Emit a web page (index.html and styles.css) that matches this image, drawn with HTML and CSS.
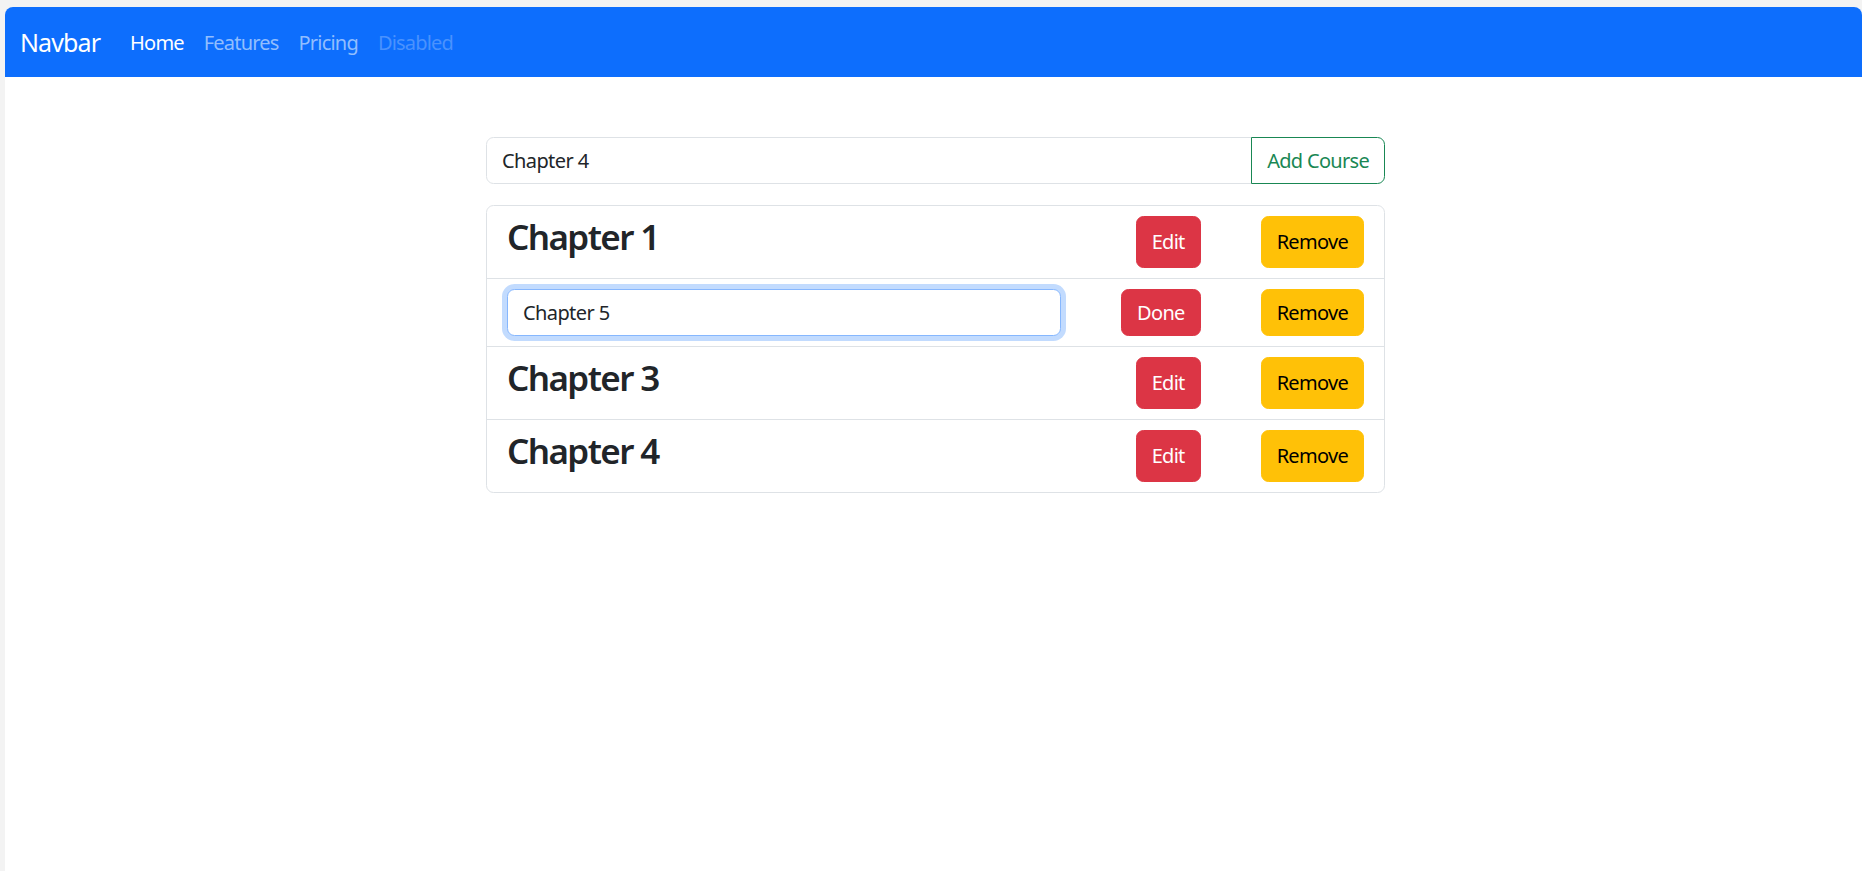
FILE: index.html
```html
<!DOCTYPE html>
<html lang="en">
<head>
<meta charset="utf-8">
<title>Courses</title>
<link rel="stylesheet" href="styles.css">
</head>
<body>
<div class="window">
  <nav class="navbar">
    <a class="brand" href="#">Navbar</a>
    <ul class="nav">
      <li><a class="nav-link active" href="#">Home</a></li>
      <li><a class="nav-link" href="#">Features</a></li>
      <li><a class="nav-link" href="#">Pricing</a></li>
      <li><a class="nav-link disabled">Disabled</a></li>
    </ul>
  </nav>
  <main class="main">
    <div class="content">
      <div class="input-group">
        <input class="field" type="text" value="Chapter 4">
        <button class="btn btn-outline-success">Add Course</button>
      </div>
      <ul class="course-list">
        <li class="course">
          <h3 class="course-title">Chapter 1</h3>
          <button class="btn btn-danger">Edit</button>
          <button class="btn btn-warning">Remove</button>
        </li>
        <li class="course editing">
          <input class="field focused" type="text" value="Chapter 5">
          <button class="btn btn-danger">Done</button>
          <button class="btn btn-warning">Remove</button>
        </li>
        <li class="course">
          <h3 class="course-title">Chapter 3</h3>
          <button class="btn btn-danger">Edit</button>
          <button class="btn btn-warning">Remove</button>
        </li>
        <li class="course">
          <h3 class="course-title">Chapter 4</h3>
          <button class="btn btn-danger">Edit</button>
          <button class="btn btn-warning">Remove</button>
        </li>
      </ul>
    </div>
  </main>
</div>
</body>
</html>
```

FILE: styles.css
```css
* {
  box-sizing: border-box;
}

html, body {
  margin: 0;
  height: 100%;
}

body {
  background: #f3f3f3;
  padding: 7px 0 0 5px;
  font-family: "Noto Sans", "Open Sans", sans-serif;
  font-size: 20px;
  line-height: 30px;
  color: #212529;
  overflow: hidden;
}

.window {
  background: #ffffff;
  border-radius: 8px 8px 0 0;
  overflow: hidden;
  height: 100%;
}

.navbar {
  background: #0d6efd;
  height: 70px;
  padding: 11px 15px 9px;
  display: flex;
  align-items: center;
}

.brand {
  color: #ffffff;
  font-size: 25px;
  line-height: 37.5px;
  padding: 6.25px 0;
  margin-right: 20px;
  text-decoration: none;
  letter-spacing: -0.9px;
}

.nav {
  list-style: none;
  margin: 0;
  padding: 0;
  display: flex;
}

.nav-link {
  display: block;
  padding: 7.5px 10px;
  color: #92befe;
  text-decoration: none;
  letter-spacing: -0.8px;
}

.nav-link.active {
  color: #ffffff;
}

.nav-link.disabled {
  color: #4a92fd;
}

.main {
  padding: 60px 0 0 4px;
}

.content {
  width: 899px;
  margin: 0 auto;
}

.input-group {
  display: flex;
}

.field {
  font: inherit;
  color: #212529;
  background: #ffffff;
  border: 1px solid #dee2e6;
  border-radius: 7.5px;
  padding: 7.5px 15px;
  height: 47px;
  min-width: 0;
  flex: 1;
  outline: none;
  letter-spacing: -0.6px;
}

.input-group .field {
  border-radius: 7.5px 0 0 7.5px;
}

.input-group .btn {
  border-radius: 0 7.5px 7.5px 0;
  margin-left: -1px;
}

.field.focused {
  border-color: #86b7fe;
  box-shadow: 0 0 0 5px rgba(13, 110, 253, 0.25);
}

.btn {
  font: inherit;
  display: flex;
  align-items: center;
  justify-content: center;
  padding: 7.5px 15px;
  border: 1px solid transparent;
  border-radius: 7.5px;
  cursor: pointer;
  letter-spacing: -0.7px;
}

.btn-outline-success {
  color: #198754;
  border-color: #198754;
  background: #ffffff;
  height: 47px;
}

.btn-danger {
  background: #dc3545;
  border-color: #dc3545;
  color: #ffffff;
}

.btn-warning {
  background: #ffc107;
  border-color: #ffc107;
  color: #000000;
}

.course-list {
  list-style: none;
  margin: 21px 0 0;
  padding: 0;
  border: 1px solid #dee2e6;
  border-radius: 7.5px;
}

.course {
  display: flex;
  align-items: stretch;
  gap: 60px;
  padding: 10px 20px;
  border-bottom: 1px solid #dee2e6;
}

.course:last-child {
  border-bottom: none;
}

.course-title {
  flex: 1;
  margin: 0 0 10px;
  font-size: 35px;
  line-height: 42px;
  font-weight: 600;
  letter-spacing: -1.6px;
}

.course.editing {
  align-items: center;
}

.course.editing .btn {
  height: 47px;
}
```
